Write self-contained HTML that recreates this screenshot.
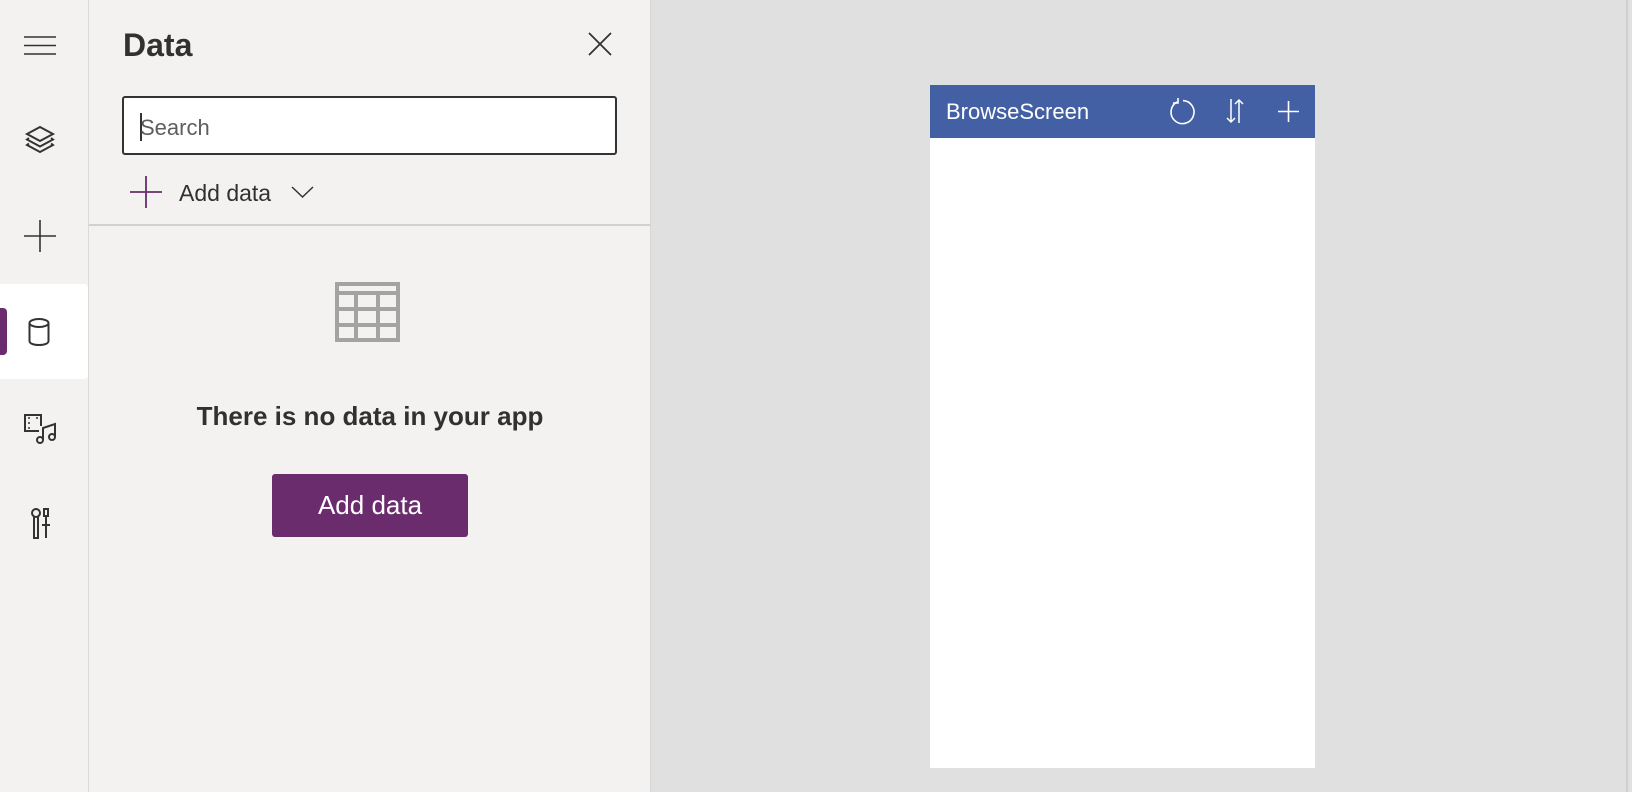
<!DOCTYPE html>
<html><head><meta charset="utf-8"><style>
*{margin:0;padding:0;box-sizing:border-box}
body{width:1632px;height:792px;overflow:hidden;background:#e0e0e0;font-family:"Liberation Sans",sans-serif;position:relative}
.rail{position:absolute;left:0;top:0;width:89px;height:792px;background:#f3f2f1;border-right:1px solid #dcdad8}
.panel{position:absolute;left:89px;top:0;width:562px;height:792px;background:#f3f2f1;border-right:1px solid #d8d6d4}
.abs{position:absolute}
svg{position:absolute;overflow:visible}
</style></head><body>
<div class="rail">
  <svg style="left:24px;top:36px" width="32" height="20"><path d="M0 1H32M0 9.5H32M0 18H32" stroke="#333" stroke-width="1.6"/></svg>
  <svg style="left:25px;top:125px" width="30" height="28" viewBox="0 0 30 28"><g fill="none" stroke="#333" stroke-width="2" stroke-linejoin="miter"><path d="M15 2L28 9L15 16L2 9Z"/><path d="M4 13L2 14.5L15 21.5L28 14.5L26 13"/><path d="M4 18.5L2 20L15 27L28 20L26 18.5"/></g></svg>
  <svg style="left:24px;top:220px" width="32" height="32"><path d="M16 0V32M0 16H32" stroke="#333" stroke-width="1.6"/></svg>
  <div class="abs" style="left:0;top:284px;width:88px;height:95px;background:#fff;border-radius:0 4px 4px 0"></div>
  <div class="abs" style="left:0;top:308px;width:7px;height:47px;background:#6b2c6e;border-radius:0 4px 4px 0"></div>
  <svg style="left:28px;top:318px" width="22" height="28" viewBox="0 0 22 28"><g fill="none" stroke="#333" stroke-width="2"><ellipse cx="11" cy="5" rx="9.5" ry="4"/><path d="M1.5 5V23C1.5 25.5 5.5 27 11 27S20.5 25.5 20.5 23V5"/></g></svg>
  <svg style="left:24px;top:414px" width="32" height="30" viewBox="0 0 32 30"><g fill="none" stroke="#333" stroke-width="2"><path d="M15 17H1V1H17V12"/><path d="M5 3V5M5 8V10M5 13V15M13 3V5" stroke-width="1.5"/><circle cx="16" cy="26" r="3"/><circle cx="28" cy="23" r="3"/><path d="M19 26V14L31 10V23"/></g></svg>
  <svg style="left:31px;top:508px" width="20" height="32" viewBox="0 0 20 32"><g fill="none" stroke="#333" stroke-width="2"><circle cx="5" cy="5" r="4"/><path d="M3 8V30H7V8"/><path d="M13 1H17V8H13ZM15 8V30M11 17H19"/></g></svg>
</div>
<div class="panel">
  <div class="abs" style="left:34px;top:27px;font-size:32px;font-weight:bold;color:#323130">Data</div>
  <svg style="left:499px;top:32px" width="24" height="24"><path d="M1 1L23 23M23 1L1 23" stroke="#333" stroke-width="1.8"/></svg>
  <div class="abs" style="left:33px;top:96px;width:495px;height:59px;background:#fff;border:2px solid #333;border-radius:3px"></div>
  <div class="abs" style="left:51px;top:113px;width:1.5px;height:28px;background:#333"></div>
  <div class="abs" style="left:51px;top:115px;font-size:22px;color:#605e5c">Search</div>
  <svg style="left:41px;top:176px" width="32" height="32"><path d="M16 0V32M0 16H32" stroke="#6b2c6e" stroke-width="1.8"/></svg>
  <div class="abs" style="left:90px;top:180px;font-size:23px;color:#323130">Add data</div>
  <svg style="left:202px;top:186px" width="23" height="12"><path d="M1 1L11.5 11L22 1" fill="none" stroke="#333" stroke-width="1.5"/></svg>
  <div class="abs" style="left:0;top:224px;width:561px;height:2px;background:#d2d0ce"></div>
  <svg style="left:246px;top:282px" width="65" height="60" viewBox="0 0 65 60"><g fill="#a3a3a3"><rect x="0" y="0" width="65" height="4"/><rect x="0" y="0" width="4" height="60"/><rect x="61" y="0" width="4" height="60"/><rect x="0" y="56" width="65" height="4"/><rect x="0" y="9" width="65" height="4"/><rect x="0" y="25" width="65" height="4"/><rect x="0" y="41" width="65" height="4"/><rect x="19" y="9" width="4" height="50"/><rect x="41" y="9" width="4" height="50"/></g></svg>
  <div class="abs" style="left:0;top:401px;width:562px;text-align:center;font-size:26px;font-weight:bold;color:#323130">There is no data in your app</div>
  <div class="abs" style="left:183px;top:474px;width:196px;height:63px;background:#6b2c6e;border-radius:3px;color:#fff;font-size:26px;text-align:center;line-height:63px">Add data</div>
</div>
<div class="abs" style="left:930px;top:85px;width:385px;height:683px;background:#fff"></div>
<div class="abs" style="left:930px;top:85px;width:385px;height:53px;background:#4460a5"></div>
<div class="abs" style="left:946px;top:99px;font-size:22px;color:#fff">BrowseScreen</div>
<svg style="left:1169px;top:98px" width="26" height="27" viewBox="0 0 26 27"><g fill="none" stroke="#fff" stroke-width="1.6"><path d="M8 4A11.5 11.5 0 1 0 14 2.6"/><path d="M9 0V5H4"/></g></svg>
<svg style="left:1227px;top:99px" width="16" height="24"><g fill="none" stroke="#fff" stroke-width="1.5"><path d="M4 0V23M0 19L4 23L8 19"/><path d="M12 24V1M8 5L12 1L16 5"/></g></svg>
<svg style="left:1278px;top:101px" width="21" height="21"><path d="M10.5 0V21M0 10.5H21" stroke="#fff" stroke-width="1.6"/></svg>
<div class="abs" style="left:1626px;top:0;width:2px;height:792px;background:#cfcfcf"></div>
</body></html>
